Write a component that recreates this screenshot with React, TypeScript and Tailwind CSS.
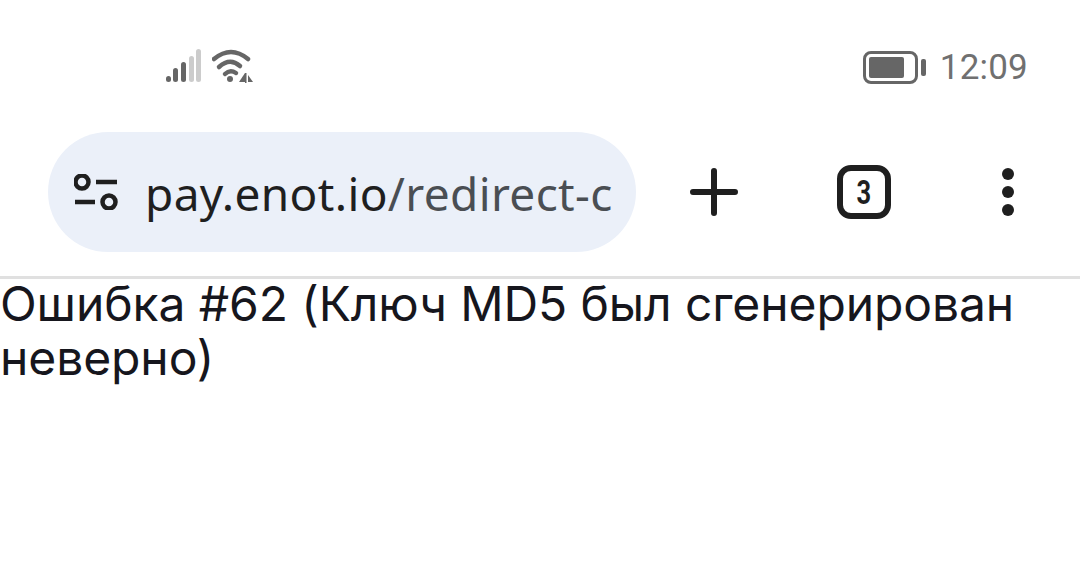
export default function App() {
  return (
    <div className="w-[1080px] h-[564px] bg-white overflow-hidden font-['Roboto',sans-serif] text-[#1f1f1f]">
      <div className="h-[132px] flex items-center pl-[166px] pr-[52px]">
        <svg width="36" height="34" viewBox="0 0 36 34">
          <rect x="0" y="27" width="5" height="6" rx="2.5" fill="#666" />
          <rect x="7" y="19" width="5" height="14" rx="2.5" fill="#666" />
          <rect x="15" y="13" width="5" height="20" rx="2.5" fill="#666" />
          <rect x="23" y="7" width="5" height="26" rx="2.5" fill="#ccc" />
          <rect x="30" y="0" width="5" height="33" rx="2.5" fill="#ccc" />
        </svg>
        <svg width="42" height="36" viewBox="0 0 42 36" className="ml-[10px]" fill="none">
          <path d="M2 11 Q19 -3 36 11" stroke="#666" strokeWidth="4.5" strokeLinecap="round" />
          <path d="M7 19 Q18 9 28 18" stroke="#666" strokeWidth="4.5" strokeLinecap="round" />
          <path d="M13 26 Q18 21 24 25" stroke="#666" strokeWidth="4.5" strokeLinecap="round" />
          <circle cx="18" cy="31" r="3" fill="#666" />
          <path d="M33 25 L33 34 L27 34 Z" fill="#666" />
          <rect x="33" y="25" width="1.5" height="10" fill="#666" />
          <path d="M36 27 L41 34 L36 34 Z" fill="#666" />
        </svg>
        <div className="ml-auto flex items-center mt-[2px]">
          <div className="w-[55px] h-[33px] rounded-[8px] border-[3px] border-[#666] p-[3px]">
            <div className="w-[35px] h-full bg-[#666] rounded-[2px]" />
          </div>
          <div className="w-[5px] h-[17px] bg-[#666] rounded-[2px] ml-[3px]" />
          <span className="ml-[14px] text-[35px] leading-none text-[#707070] tracking-[0.2px]">12:09</span>
        </div>
      </div>
      <div className="h-[120px] flex items-center pl-[48px]">
        <div className="w-[588px] h-[120px] rounded-[60px] bg-[#ebf0f9] flex items-center pl-[26px]">
          <svg width="44" height="36" viewBox="0 0 44 36" className="shrink-0" fill="none">
            <circle cx="8" cy="8" r="6.5" stroke="#1f1f1f" strokeWidth="4.5" />
            <path d="M22 8 H43" stroke="#1f1f1f" strokeWidth="4.5" />
            <path d="M1 28 H21" stroke="#1f1f1f" strokeWidth="4.5" />
            <circle cx="35" cy="28" r="6.5" stroke="#1f1f1f" strokeWidth="4.5" />
          </svg>
          <div className="ml-[27px] whitespace-nowrap text-[46px] leading-none tracking-[0.36px] font-['Noto_Sans',sans-serif] mt-[2px]">
            <span>pay.enot.io</span>
            <span className="text-[#4a4e53]">/redirect-c</span>
          </div>
        </div>
        <svg width="50" height="50" viewBox="0 0 50 50" className="ml-[53px]" fill="none">
          <path d="M25 4 V46 M4 25 H46" stroke="#1f1f1f" strokeWidth="6" strokeLinecap="round" />
        </svg>
        <div className="ml-[98px] w-[54px] h-[54px] rounded-[14px] border-[6px] border-[#1f1f1f] flex items-center justify-center">
          <span className="text-[34px] font-bold leading-none scale-x-75">3</span>
        </div>
        <div className="ml-[111px] flex flex-col gap-[6px]">
          <div className="w-[12px] h-[12px] rounded-full bg-[#1f1f1f]" />
          <div className="w-[12px] h-[12px] rounded-full bg-[#1f1f1f]" />
          <div className="w-[12px] h-[12px] rounded-full bg-[#1f1f1f]" />
        </div>
      </div>
      <div className="mt-[24px] h-[3px] bg-[#e0e0e0]" />
      <div className="mt-[-2px] text-[48px] leading-[54px] tracking-[-0.1px] text-[#16161d] font-['Inter',sans-serif]">Ошибка #62 (Ключ MD5 был сгенерирован неверно)</div>
    </div>
  );
}
